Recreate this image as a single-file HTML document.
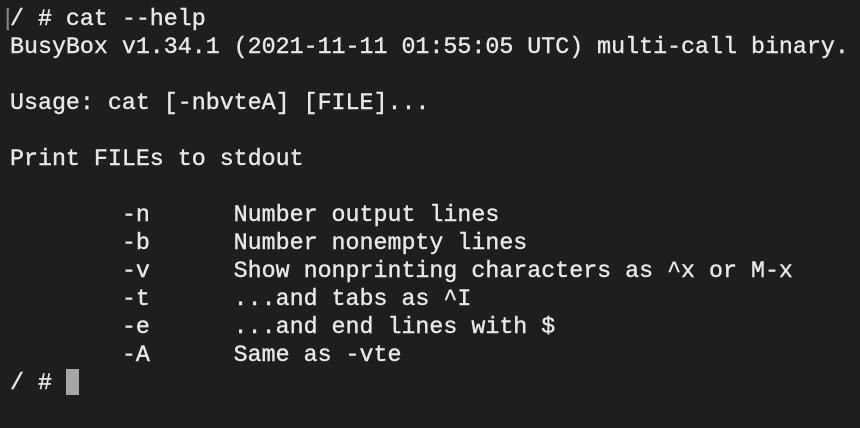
<!DOCTYPE html>
<html><head><style>
html,body{margin:0;padding:0;background:#1e1e1e;width:860px;height:428px;overflow:hidden}
pre{margin:0;position:absolute;left:10px;top:5px;font-family:"Liberation Mono",monospace;font-size:23.3px;line-height:28px;color:#e8e8e8;-webkit-text-stroke:0.4px #e8e8e8}
.b{position:absolute;left:2px;top:5px;font-family:"Liberation Mono",monospace;font-size:23.3px;line-height:28px;color:#888;width:7px;overflow:hidden}
.cur{position:absolute;left:66px;top:369px;width:13px;height:26px;background:#a6a6a6}
</style></head><body>
<div class="b">[</div>
<pre>/ # cat --help
BusyBox v1.34.1 (2021-11-11 01:55:05 UTC) multi-call binary.

Usage: cat [-nbvteA] [FILE]...

Print FILEs to stdout

        -n      Number output lines
        -b      Number nonempty lines
        -v      Show nonprinting characters as ^x or M-x
        -t      ...and tabs as ^I
        -e      ...and end lines with $
        -A      Same as -vte
/ # </pre>
<div class="cur"></div>
</body></html>
